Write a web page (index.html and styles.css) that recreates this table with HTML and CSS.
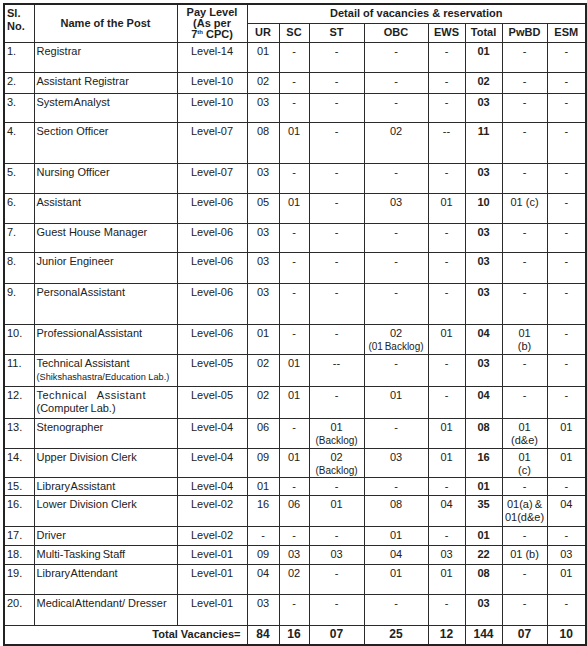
FILE: index.html
```html
<!DOCTYPE html>
<html lang="en">
<head>
<meta charset="utf-8">
<title>Detail of vacancies</title>
<link rel="stylesheet" href="styles.css">
</head>
<body>
<table class="vac">
<colgroup>
<col class="c-sl"><col class="c-name"><col class="c-pay"><col class="c-ur"><col class="c-sc"><col class="c-st"><col class="c-obc"><col class="c-ews"><col class="c-tot"><col class="c-pwbd"><col class="c-esm">
</colgroup>
<thead>
<tr class="hr1">
<th rowspan="2" class="sl-h">Sl.<br>No.</th>
<th rowspan="2">Name of the Post</th>
<th rowspan="2" class="pay-h">Pay Level<br>(As per<br>7<sup>th</sup> CPC)</th>
<th colspan="8">Detail of vacancies &amp; reservation</th>
</tr>
<tr class="hr2">
<th>UR</th><th>SC</th><th>ST</th><th>OBC</th><th>EWS</th><th>Total</th><th>PwBD</th><th>ESM</th>
</tr>
</thead>
<tbody>
<tr class="r30"><td class="sl">1.</td><td class="nm">Registrar</td><td>Level-14</td><td>01</td><td>-</td><td>-</td><td>-</td><td>-</td><td class="tot">01</td><td>-</td><td>-</td></tr>
<tr class="r21"><td class="sl">2.</td><td class="nm">Assistant Registrar</td><td>Level-10</td><td>02</td><td>-</td><td>-</td><td>-</td><td>-</td><td class="tot">02</td><td>-</td><td>-</td></tr>
<tr class="r29"><td class="sl">3.</td><td class="nm tight">System Analyst</td><td>Level-10</td><td>03</td><td>-</td><td>-</td><td>-</td><td>-</td><td class="tot">03</td><td>-</td><td>-</td></tr>
<tr class="r41"><td class="sl">4.</td><td class="nm">Section Officer</td><td>Level-07</td><td>08</td><td>01</td><td>-</td><td>02</td><td>--</td><td class="tot">11</td><td>-</td><td>-</td></tr>
<tr class="r30"><td class="sl">5.</td><td class="nm">Nursing Officer</td><td>Level-07</td><td>03</td><td>-</td><td>-</td><td>-</td><td>-</td><td class="tot">03</td><td>-</td><td>-</td></tr>
<tr class="r30"><td class="sl">6.</td><td class="nm">Assistant</td><td>Level-06</td><td>05</td><td>01</td><td>-</td><td>03</td><td>01</td><td class="tot">10</td><td>01 (c)</td><td>-</td></tr>
<tr class="r29"><td class="sl">7.</td><td class="nm">Guest House Manager</td><td>Level-06</td><td>03</td><td>-</td><td>-</td><td>-</td><td>-</td><td class="tot">03</td><td>-</td><td>-</td></tr>
<tr class="r31"><td class="sl">8.</td><td class="nm">Junior Engineer</td><td>Level-06</td><td>03</td><td>-</td><td>-</td><td>-</td><td>-</td><td class="tot">03</td><td>-</td><td>-</td></tr>
<tr class="r41"><td class="sl">9.</td><td class="nm tight">Personal Assistant</td><td>Level-06</td><td>03</td><td>-</td><td>-</td><td>-</td><td>-</td><td class="tot">03</td><td>-</td><td>-</td></tr>
<tr class="r30"><td class="sl">10.</td><td class="nm tight">Professional Assistant</td><td>Level-06</td><td>01</td><td>-</td><td>-</td><td>02<br><span class="small semi">(01 Backlog)</span></td><td>01</td><td class="tot">04</td><td>01<br>(b)</td><td>-</td></tr>
<tr class="r32"><td class="sl">11.</td><td class="nm">Technical Assistant<br><span class="mini">(Shikshashastra/Education Lab.)</span></td><td>Level-05</td><td>02</td><td>01</td><td>--</td><td>-</td><td>-</td><td class="tot">03</td><td>-</td><td>-</td></tr>
<tr class="r32"><td class="sl">12.</td><td class="nm"><span class="spread">Technical Assistant</span><br><span class="semi">(Computer Lab.)</span></td><td>Level-05</td><td>02</td><td>01</td><td>-</td><td>01</td><td>-</td><td class="tot">04</td><td>-</td><td>-</td></tr>
<tr class="r30"><td class="sl">13.</td><td class="nm">Stenographer</td><td>Level-04</td><td>06</td><td>-</td><td>01<br><span class="small">(Backlog)</span></td><td>-</td><td>01</td><td class="tot">08</td><td>01<br>(d&amp;e)</td><td>01</td></tr>
<tr class="r28"><td class="sl">14.</td><td class="nm">Upper Division Clerk</td><td>Level-04</td><td>09</td><td>01</td><td>02<br><span class="small">(Backlog)</span></td><td>03</td><td>01</td><td class="tot">16</td><td>01<br>(c)</td><td>01</td></tr>
<tr class="r18"><td class="sl">15.</td><td class="nm tight">Library Assistant</td><td>Level-04</td><td>01</td><td>-</td><td>-</td><td>-</td><td>-</td><td class="tot">01</td><td>-</td><td>-</td></tr>
<tr class="r31"><td class="sl">16.</td><td class="nm">Lower Division Clerk</td><td>Level-02</td><td>16</td><td>06</td><td>01</td><td>08</td><td>04</td><td class="tot">35</td><td class="semi">01(a) &amp;<br>01(d&amp;e)</td><td>04</td></tr>
<tr class="r19"><td class="sl">17.</td><td class="nm">Driver</td><td>Level-02</td><td>-</td><td>-</td><td>-</td><td>01</td><td>-</td><td class="tot">01</td><td>-</td><td>-</td></tr>
<tr class="r19"><td class="sl">18.</td><td class="nm semi">Multi-Tasking Staff</td><td>Level-01</td><td>09</td><td>03</td><td>03</td><td>04</td><td>03</td><td class="tot">22</td><td>01 (b)</td><td>03</td></tr>
<tr class="r30"><td class="sl">19.</td><td class="nm tight">Library Attendant</td><td>Level-01</td><td>04</td><td>02</td><td>-</td><td>01</td><td>01</td><td class="tot">08</td><td>-</td><td>01</td></tr>
<tr class="r31"><td class="sl">20.</td><td class="nm"><span class="tight">Medical Attendant/</span> Dresser</td><td>Level-01</td><td>03</td><td>-</td><td>-</td><td>-</td><td>-</td><td class="tot">03</td><td>-</td><td>-</td></tr>
</tbody>
<tfoot>
<tr class="r20 total"><td colspan="3" class="tot-label">Total Vacancies=</td><td>84</td><td>16</td><td>07</td><td>25</td><td>12</td><td>144</td><td>07</td><td>10</td></tr>
</tfoot>
</table>
</body>
</html>
```

FILE: styles.css
```css
html, body {
  margin: 0;
  padding: 0;
  background: #ffffff;
}

body {
  font-family: "Liberation Sans", Arial, sans-serif;
  color: #222222;
}

.vac {
  border-collapse: collapse;
  table-layout: fixed;
  width: 582px;
  margin: 3px 0 0 3px;
  border: 2px solid #222222;
  font-size: 11px;
  line-height: 13px;
}

.c-sl { width: 30px; }
.c-name { width: 143px; }
.c-pay { width: 70px; }
.c-ur { width: 32px; }
.c-sc { width: 30px; }
.c-st { width: 55px; }
.c-obc { width: 64px; }
.c-ews { width: 37px; }
.c-tot { width: 37px; }
.c-pwbd { width: 45px; }
.c-esm { width: 39px; }

.vac th,
.vac td {
  border: 1px solid #2b2b2b;
  padding: 2px 2px 0 2px;
  vertical-align: top;
  text-align: center;
  overflow: hidden;
  white-space: nowrap;
}

.vac th {
  font-weight: bold;
  color: #1e1e1e;
  vertical-align: middle;
  padding: 0 2px;
}

.hr1 { height: 19px; }
.hr2 { height: 19px; }

.vac th.sl-h {
  text-align: left;
  vertical-align: top;
  padding-top: 2px;
  line-height: 13px;
}

.vac th.pay-h {
  line-height: 11px;
  padding-top: 1px;
}

.pay-h sup {
  font-size: 6px;
  line-height: 0;
  vertical-align: 4px;
}

.vac td.sl,
.vac td.nm {
  text-align: left;
}

.vac td.tot {
  font-weight: bold;
}

.small {
  font-size: 10px;
}

.mini {
  font-size: 9.2px;
}

.tight {
  word-spacing: -2px;
}

.semi {
  word-spacing: -1px;
}

.spread {
  letter-spacing: 0.5px;
  word-spacing: 7px;
}

.r18 { height: 18px; }
.r19 { height: 19px; }
.r20 { height: 20px; }
.r21 { height: 21px; }
.r28 { height: 28px; }
.r29 { height: 29px; }
.r30 { height: 30px; }
.r31 { height: 31px; }
.r32 { height: 32px; }
.r41 { height: 41px; }

.total td {
  font-weight: bold;
  font-size: 12px;
  vertical-align: middle;
  padding-top: 0;
}

.vac td.tot-label {
  font-size: 11px;
  text-align: right;
  padding-right: 6px;
}
```
